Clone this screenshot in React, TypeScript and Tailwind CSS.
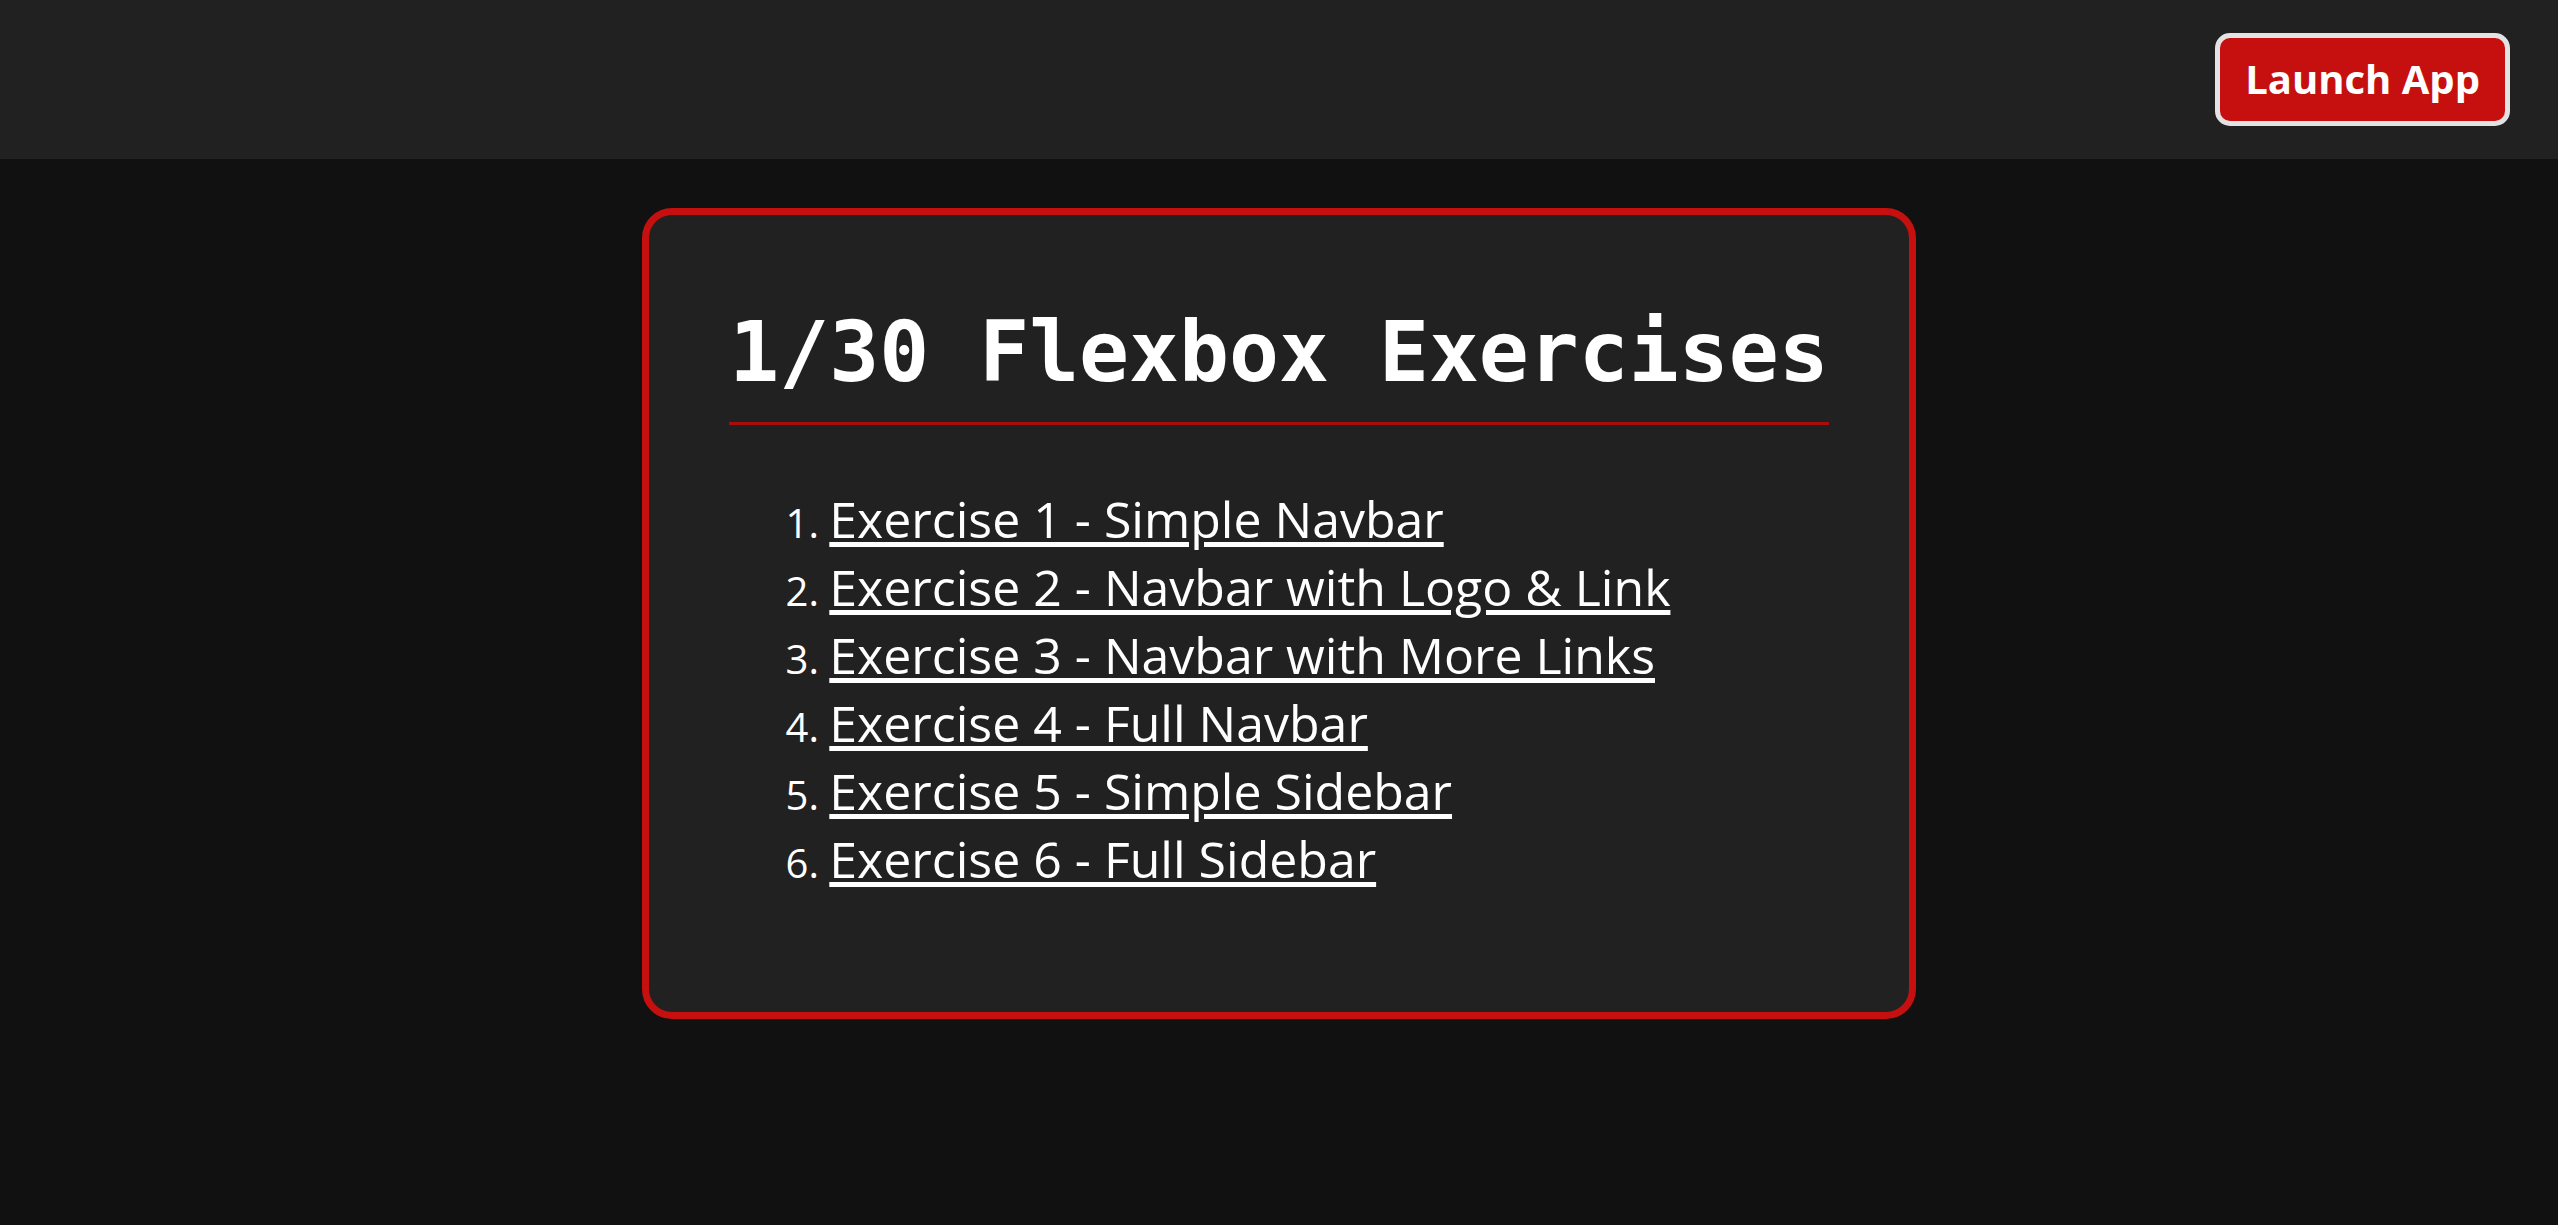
export default function App() {
  const items = [
    "Exercise 1 - Simple Navbar",
    "Exercise 2 - Navbar with Logo & Link",
    "Exercise 3 - Navbar with More Links",
    "Exercise 4 - Full Navbar",
    "Exercise 5 - Simple Sidebar",
    "Exercise 6 - Full Sidebar",
  ];
  return (
    <div className="min-h-[1225px] bg-[#111111] font-['Open_Sans',sans-serif] text-white">
      <header className="flex h-[159px] items-center justify-end bg-[#212121] pr-[48px]">
        <button className="rounded-[15px] border-[5px] border-[#e3e3e3] bg-[#c61010] px-[25px] py-[14px] text-[40px] font-bold leading-[1.36] text-white">
          Launch App
        </button>
      </header>
      <main className="flex justify-center pt-[49px]">
        <div className="w-fit rounded-[30px] border-[7px] border-[#c61010] bg-[#212121] px-[80px] pb-[119px] pt-[90px]">
          <h1 className="border-b-[3px] border-[#a80c0c] pb-[20px] font-['DejaVu_Sans_Mono',monospace] text-[83px] font-bold leading-[1.164] whitespace-nowrap">
            1/30 Flexbox Exercises
          </h1>
          <ol className="mt-[60px] list-decimal pl-[100px] text-[40px]">
            {items.map((t) => (
              <li key={t} className="leading-[1.362]">
                <a
                  href="#"
                  className="text-[50px] leading-[1.362] underline decoration-[5px] underline-offset-[4px]"
                >
                  {t}
                </a>
              </li>
            ))}
          </ol>
        </div>
      </main>
    </div>
  );
}
